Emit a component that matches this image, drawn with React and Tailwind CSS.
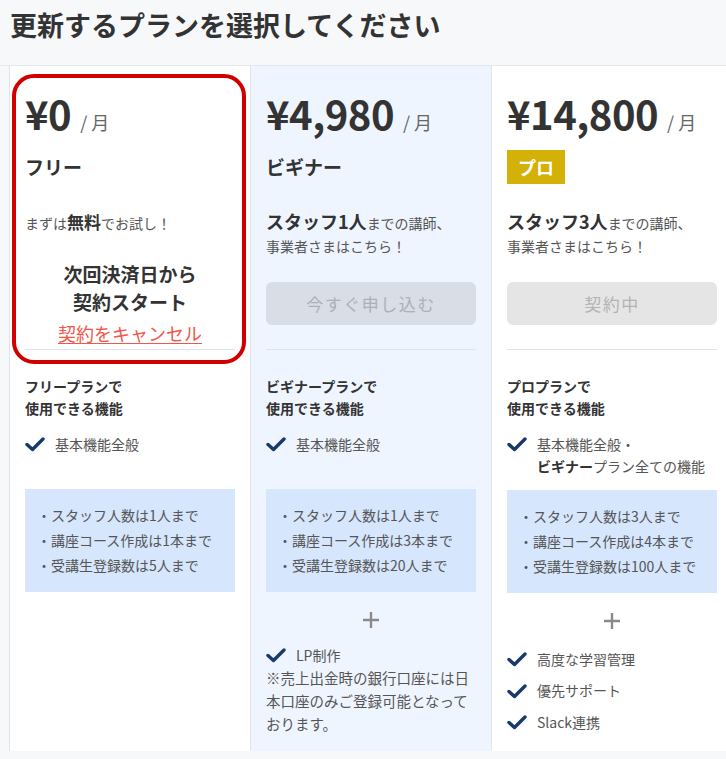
const font = { fontFamily: '"Noto Sans CJK JP", "Noto Sans", sans-serif' };

const Check = () => (
  <svg width="20" height="16" viewBox="0 0 20 16" className="shrink-0">
    <path d="M2 8.5 L7.5 13.5 L18 3" fill="none" stroke="#173a6a" strokeWidth="3.4" strokeLinecap="round" strokeLinejoin="round" />
  </svg>
);

const plans = [
  {
    key: "free",
    price: "¥0",
    name: "フリー",
    bg: "bg-white",
    limits: ["スタッフ人数は1人まで", "講座コース作成は1本まで", "受講生登録数は5人まで"],
  },
  {
    key: "beginner",
    price: "¥4,980",
    name: "ビギナー",
    bg: "bg-[#eff5ff]",
    staff: "スタッフ1人",
    button: "今すぐ申し込む",
    limits: ["スタッフ人数は1人まで", "講座コース作成は3本まで", "受講生登録数は20人まで"],
  },
  {
    key: "pro",
    price: "¥14,800",
    name: "プロ",
    bg: "bg-white",
    staff: "スタッフ3人",
    button: "契約中",
    limits: ["スタッフ人数は3人まで", "講座コース作成は4本まで", "受講生登録数は100人まで"],
  },
];

function PlanCard({ plan }) {
  return (
    <div className={`relative w-[241px] shrink-0 h-[685px] border-l border-[#dfe3ea] px-[15px] pt-[23px] ${plan.bg}`}>
      {/* price */}
      <div className="flex items-baseline h-[48px] leading-[48px] text-[#333]">
        <span className="text-[40px] font-bold tracking-[-0.5px]">{plan.price}</span>
        <span className="ml-[9px] text-[18px] text-[#666]">/ 月</span>
      </div>

      {/* name */}
      <div className="mt-[13px] h-[34px] flex items-center">
        {plan.key === "pro" ? (
          <span className="bg-[#d4b106] text-white font-bold text-[18px] h-[34px] w-[58px] flex items-center justify-center">
            {plan.name}
          </span>
        ) : (
          <span className="text-[19px] font-bold text-[#333]">{plan.name}</span>
        )}
      </div>

      {/* description */}
      {plan.key === "free" ? (
        <div className="h-[165px] pt-[26px]">
          <p className="text-[14px] leading-[23px] text-[#555]">
            まずは<span className="text-[17px] font-bold text-[#333]">無料</span>でお試し！
          </p>
          <p className="mt-[25px] text-center text-[19px] font-bold leading-[28px] text-[#333]">
            次回決済日から<br />契約スタート
          </p>
          <p className="mt-[5px] text-center text-[18px] leading-[24px] text-[#f2554a] underline underline-offset-2">
            契約をキャンセル
          </p>
        </div>
      ) : (
        <div className="h-[165px] pt-[26px]">
          <p className="text-[14px] leading-[23px] text-[#555]">
            <span className="text-[18px] font-bold text-[#333]">{plan.staff}</span>までの講師、
            <br />
            事業者さまはこちら！
          </p>
          <div
            className={`mt-[24px] h-[43px] rounded-md flex items-center justify-center text-[17px] tracking-[1.5px] ${
              plan.key === "pro" ? "bg-[#e5e5e5] text-[#b3b3b3]" : "bg-[#d8dde6] text-[#aab1bc]"
            }`}
          >
            {plan.button}
          </div>
        </div>
      )}

      <div className="border-t border-[#dfe3ea]" />

      {/* features */}
      <p className="mt-[25px] text-[14px] font-bold leading-[22px] text-[#333]">
        {plan.name}プランで<br />使用できる機能
      </p>
      <div className="mt-[14px] min-h-[44px] flex items-start gap-[10px]">
        <div className="h-[22px] flex items-center"><Check /></div>
        <p className="text-[14px] leading-[22px] text-[#555]">
          {plan.key === "pro" ? (
            <>
              基本機能全般・<br />
              <span className="font-bold text-[#333]">ビギナー</span>プラン全ての機能
            </>
          ) : (
            "基本機能全般"
          )}
        </p>
      </div>

      <div className={`${plan.key === "pro" ? "mt-[13px]" : "mt-[12px]"} bg-[#d6e6fd] px-[12px] py-[14px]`}>
        {plan.limits.map((l) => (
          <p key={l} className="text-[14px] leading-[25px] text-[#555]">・{l}</p>
        ))}
      </div>

      {plan.key !== "free" && (
        <div className="mt-[16px] h-[24px] flex items-center justify-center">
          <svg width="18" height="18" viewBox="0 0 18 18">
            <path d="M9 1 V17 M1 9 H17" stroke="#8a8a8a" strokeWidth="2.4" />
          </svg>
        </div>
      )}

      {plan.key === "beginner" && (
        <div className="mt-[12px]">
          <div className="flex items-center gap-[10px] h-[22px]">
            <Check />
            <span className="text-[14px] text-[#555]">LP制作</span>
          </div>
          <p className="text-[14.5px] leading-[23px] text-[#555]">
            ※売上出金時の銀行口座には日本口座のみご登録可能となっております。
          </p>
        </div>
      )}

      {plan.key === "pro" && (
        <div className="mt-[15px] flex flex-col gap-[9.5px]">
          {["高度な学習管理", "優先サポート", "Slack連携"].map((f) => (
            <div key={f} className="flex items-center gap-[10px] h-[22px]">
              <Check />
              <span className="text-[14px] text-[#555]">{f}</span>
            </div>
          ))}
        </div>
      )}

      {plan.key === "free" && (
        <div className="absolute left-[2px] top-[8px] w-[234px] h-[290px] rounded-[22px] border-[4.5px] border-[#d00000] pointer-events-none" />
      )}
    </div>
  );
}

export default function App() {
  return (
    <div className="w-[726px] h-[759px] overflow-hidden bg-[#f7f8fa]" style={font}>
      <h1 className="pl-[10px] pt-[8px] h-[65px] text-[27px] leading-[34px] font-bold text-[#333]">
        更新するプランを選択してください
      </h1>
      <div className="flex pl-[9px] border-t border-[#e4e7ec] w-[760px]">
        {plans.map((p) => (
          <PlanCard key={p.key} plan={p} />
        ))}
      </div>
    </div>
  );
}
